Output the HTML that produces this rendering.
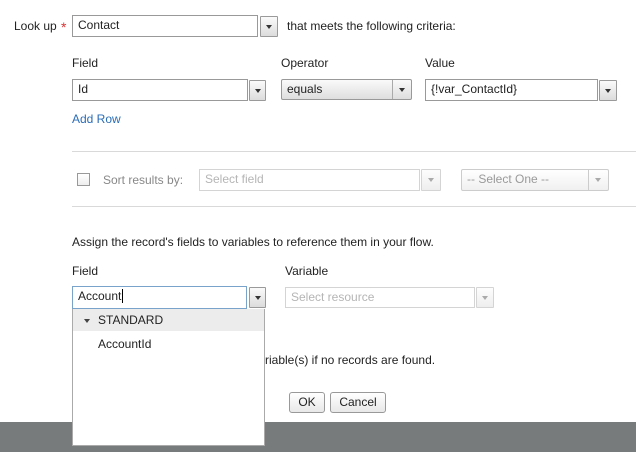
<!DOCTYPE html>
<html><head><style>
*{margin:0;padding:0;box-sizing:border-box}
body{width:636px;height:452px;position:relative;background:#fff;font-family:"Liberation Sans",Arial,sans-serif;font-size:12px;color:#222;overflow:hidden}
.a{position:absolute;white-space:nowrap}
.in{position:absolute;border:1px solid #b5b5b5;background:#fff;padding-left:5px;line-height:19px;font-size:12px}
.btn{position:absolute;border:1px solid #9a9a9a;background:linear-gradient(#fafafa,#dcdcdc);border-radius:1px}
.btn:after{content:"";position:absolute;left:50%;top:50%;margin:-2px 0 0 -3px;border-left:3px solid transparent;border-right:3px solid transparent;border-top:4px solid #333}
.dis{border-color:#d4d4d4;color:#b5b5b5}
.btn.dis{background:linear-gradient(#fdfdfd,#eee)}
.btn.dis:after{border-top-color:#aaa}
.hr{position:absolute;left:72px;right:0;height:1px;background:#d9d9d9}
</style></head><body>
<div class="a" style="left:14px;top:19px">Look up</div>
<div class="a" style="left:61px;top:19px;color:#d33;font-size:14px">*</div>
<div class="in" style="left:72px;top:15px;width:186px;height:22px;border-color:#999">Contact</div>
<div class="btn" style="left:260px;top:16px;width:18px;height:21px"></div>
<div class="a" style="left:287px;top:19px">that meets the following criteria:</div>

<div class="a" style="left:72px;top:56px">Field</div>
<div class="a" style="left:281px;top:56px">Operator</div>
<div class="a" style="left:425px;top:56px">Value</div>
<div class="in" style="left:72px;top:79px;width:176px;height:22px;border-color:#999">Id</div>
<div class="btn" style="left:249px;top:80px;width:17px;height:21px"></div>
<div class="in" style="left:281px;top:79px;width:131px;height:21px;border-color:#999;background:linear-gradient(#fafafa,#dedede);border-radius:2px">equals</div>
<div class="a" style="left:392px;top:80px;width:1px;height:19px;background:#aaa"></div>
<div class="a" style="left:399px;top:88px;border-left:3px solid transparent;border-right:3px solid transparent;border-top:4px solid #333"></div>
<div class="in" style="left:425px;top:79px;width:173px;height:22px;border-color:#999">{!var_ContactId}</div>
<div class="btn" style="left:599px;top:80px;width:18px;height:21px"></div>
<div class="a" style="left:72px;top:112px;color:#2a6cb8">Add Row</div>

<div class="hr" style="top:151px"></div>
<div class="a" style="left:77px;top:173px;width:13px;height:13px;border:1px solid #999;background:linear-gradient(#fff,#eee)"></div>
<div class="a" style="left:103px;top:173px;color:#888">Sort results by:</div>
<div class="in dis" style="left:199px;top:169px;width:221px;height:22px">Select field</div>
<div class="btn dis" style="left:421px;top:169px;width:20px;height:22px"></div>
<div class="in dis" style="left:461px;top:169px;width:148px;height:22px;border-color:#ccc;color:#999;background:linear-gradient(#fff,#f0f0f0);border-radius:2px">-- Select One --</div>
<div class="a" style="left:588px;top:170px;width:1px;height:20px;background:#ccc"></div>
<div class="a" style="left:595px;top:178px;border-left:3px solid transparent;border-right:3px solid transparent;border-top:4px solid #aaa"></div>
<div class="hr" style="top:206px"></div>

<div class="a" style="left:72px;top:235px">Assign the record's fields to variables to reference them in your flow.</div>
<div class="a" style="left:72px;top:264px">Field</div>
<div class="a" style="left:285px;top:264px">Variable</div>
<div class="in" style="left:72px;top:286px;width:175px;height:23px;border-color:#7aa3cc">Account<span style="border-left:1px solid #000;margin-left:1px"></span></div>
<div class="btn" style="left:249px;top:287px;width:17px;height:21px"></div>
<div class="in dis" style="left:285px;top:287px;width:190px;height:21px">Select resource</div>
<div class="btn dis" style="left:476px;top:287px;width:18px;height:21px"></div>

<div class="a" style="left:265px;top:353px">riable(s) if no records are found.</div>
<div class="a" style="left:289px;top:392px;width:36px;height:21px;border:1px solid #999;border-radius:3px;background:linear-gradient(#fff,#e8e8e8);text-align:center;line-height:19px">OK</div>
<div class="a" style="left:330px;top:392px;width:56px;height:21px;border:1px solid #999;border-radius:3px;background:linear-gradient(#fff,#e8e8e8);text-align:center;line-height:19px">Cancel</div>

<div class="a" style="left:0;top:422px;width:636px;height:30px;background:#787b7b"></div>

<div class="a" style="left:72px;top:309px;width:193px;height:137px;background:#fff;border:1px solid #aaa;border-top:none">
 <div style="height:22px;background:#ececec;line-height:22px;padding-left:11px"><span style="display:inline-block;border-left:3px solid transparent;border-right:3px solid transparent;border-top:4px solid #444;vertical-align:middle;margin-right:8px"></span>STANDARD</div>
 <div style="padding-left:25px;padding-top:6px">AccountId</div>
</div>
</body></html>
